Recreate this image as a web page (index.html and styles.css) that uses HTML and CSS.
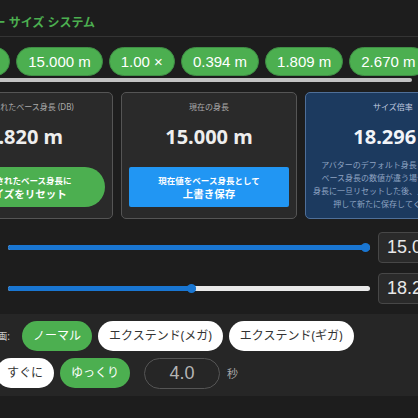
FILE: index.html
```html
<!DOCTYPE html>
<html lang="ja">
<head>
  <meta charset="UTF-8" />
  <title>アバター サイズ システム</title>
  <link rel="stylesheet" href="styles.css">
</head>
<body>
  <div class="app">
    <header class="header">
      <h1 class="title">アバター サイズ システム</h1>
    </header>

    <div class="chips">
      <span class="chip">1.820 m</span>
      <span class="chip">15.000 m</span>
      <span class="chip">1.00 ×</span>
      <span class="chip">0.394 m</span>
      <span class="chip">1.809 m</span>
      <span class="chip">2.670 m</span>
    </div>
    <div class="scrollbar"></div>

    <div class="cards">
      <div class="card">
        <div class="card-label">保存されたベース身長 (DB)</div>
        <div class="card-value">1.820 m</div>
        <button class="btn btn-green">
          <span class="btn-small">保存されたベース身長に</span>
          <span class="btn-big">サイズをリセット</span>
        </button>
      </div>
      <div class="card">
        <div class="card-label">現在の身長</div>
        <div class="card-value">15.000 m</div>
        <button class="btn btn-blue">
          <span class="btn-small">現在値をベース身長として</span>
          <span class="btn-big">上書き保存</span>
        </button>
      </div>
      <div class="card card-info">
        <div class="card-label">サイズ倍率</div>
        <div class="card-value">18.296 ×</div>
        <p class="card-note">
          アバターのデフォルト身長と保存された<br>
          ベース身長の数値が違う場合は、ベース<br>
          身長に一旦リセットした後、上書きボタンを<br>
          押して新たに保存してください。
        </p>
      </div>
    </div>

    <div class="slider-row first">
      <span class="slider-label">身長 (m)</span>
      <div class="slider">
        <div class="slider-fill" style="width: 100%"></div>
        <div class="slider-thumb" style="left: 100%"></div>
      </div>
      <input class="num" type="text" value="15.000">
    </div>
    <div class="slider-row">
      <span class="slider-label">倍率</span>
      <div class="slider">
        <div class="slider-fill" style="width: 52%"></div>
        <div class="slider-thumb" style="left: 52%"></div>
      </div>
      <input class="num" type="text" value="18.296">
    </div>

    <div class="panel">
      <div class="opt-row">
        <span class="opt-label">サイズ変化計画:</span>
        <span class="pill on">ノーマル</span>
        <span class="pill">エクステンド(メガ)</span>
        <span class="pill">エクステンド(ギガ)</span>
      </div>
      <div class="opt-row">
        <span class="opt-label short">切替:</span>
        <span class="pill">すぐに</span>
        <span class="pill on">ゆっくり</span>
        <input class="secs" type="text" value="4.0">
        <span class="unit">秒</span>
      </div>
    </div>
  </div>
</body>
</html>
```

FILE: styles.css
```css
body {
  margin: 0;
  background: #1d1d1d;
  color: #eee;
  font-family: "Noto Sans", "Noto Sans CJK JP", sans-serif;
  overflow: hidden;
}

.app {
  width: 544px;
  margin-left: -80px;
  padding: 0 17px;
}

.header {
  height: 37px;
  box-sizing: border-box;
  margin: 0 -17px;
  padding: 14px 0 0 38px;
  border-bottom: 1px solid #343434;
}

.title {
  margin: 0;
  font-size: 12px;
  line-height: 18px;
  font-weight: bold;
  color: #4caf50;
}

.chips {
  display: flex;
  gap: 6px;
  margin: 10px 0 0 -5px;
  white-space: nowrap;
}

.chip {
  flex: none;
  height: 27px;
  line-height: 27px;
  padding: 0 11px;
  border: 1px solid #3f8f45;
  border-radius: 15px;
  background: #4caf50;
  color: #fff;
  font-family: "Liberation Sans", Arial, sans-serif;
  font-size: 15px;
}

.scrollbar {
  width: 475px;
  height: 4px;
  margin-top: 2px;
  border-radius: 2px;
  background: #c2c2c2;
}

.cards {
  display: flex;
  gap: 8px;
  margin-top: 10px;
}

.card {
  flex: none;
  width: 176px;
  box-sizing: border-box;
  padding: 9px 7px 8px;
  border: 1px solid #555;
  border-radius: 5px;
  background: #2a2a2a;
  text-align: center;
}

.card-label {
  font-size: 8px;
  line-height: 10px;
  color: #aaa;
}

.card-value {
  margin-top: 12px;
  font-size: 20px;
  line-height: 26px;
  font-weight: bold;
  color: #eee;
}

.btn {
  display: flex;
  flex-direction: column;
  align-items: center;
  width: 100%;
  margin-top: 17px;
  padding: 6.5px 0;
  border: none;
  color: #fff;
  font-family: "Noto Sans", "Noto Sans CJK JP", sans-serif;
  font-weight: bold;
}

.btn-small {
  font-size: 8.5px;
  line-height: 13px;
}

.btn-big {
  font-size: 10.5px;
  line-height: 14px;
}

.btn-green {
  background: #4caf50;
  border-radius: 20px;
}

.btn-blue {
  background: #2196f3;
  border-radius: 2px;
}

.card-info {
  background: #1c3a5f;
  border-color: #4f6f98;
}

.card-info .card-label {
  color: #c3cde0;
}

.card-info .card-value {
  color: #f2f4f8;
}

.card-note {
  margin: 7.5px 0 0;
  font-size: 8px;
  line-height: 13px;
  color: #8ea3c2;
  white-space: nowrap;
}

.slider-row {
  display: flex;
  align-items: center;
  gap: 8px;
  margin-top: 10px;
}

.slider-row.first {
  margin-top: 13px;
}

.slider-label {
  flex: none;
  width: 63px;
  font-size: 10px;
  color: #ccc;
}

.slider {
  position: relative;
  flex: 1;
  height: 5px;
  border-radius: 3px;
  background: #e9e9e9;
}

.slider-fill {
  height: 100%;
  border-radius: 3px;
  background: #1976d2;
}

.slider-thumb {
  position: absolute;
  top: -2px;
  width: 9px;
  height: 9px;
  margin-left: -9px;
  border-radius: 50%;
  background: #1976d2;
}

.num {
  flex: none;
  width: 103px;
  height: 31px;
  box-sizing: border-box;
  padding: 0 8px;
  border: 1px solid #474747;
  border-radius: 4px;
  background: #2a2a2a;
  color: #e8e8e8;
  font-family: "Liberation Sans", Arial, sans-serif;
  font-size: 18px;
}

.panel {
  display: flex;
  flex-direction: column;
  gap: 7px;
  margin-top: 10px;
  padding: 7px 0;
  background: #262626;
}

.opt-row {
  display: flex;
  align-items: center;
  gap: 6px;
}

.opt-label {
  flex: none;
  width: 73px;
  margin-right: 6px;
  text-align: right;
  font-size: 10px;
  color: #ccc;
  white-space: nowrap;
  overflow: hidden;
}

.opt-label.short {
  width: 47px;
}

.pill {
  flex: none;
  height: 30px;
  line-height: 30px;
  padding: 0 11px;
  border-radius: 15px;
  background: #fff;
  color: #333;
  font-size: 12px;
}

.pill.on {
  background: #4caf50;
  color: #fff;
}

.secs {
  width: 76px;
  height: 31px;
  box-sizing: border-box;
  margin-left: 8px;
  border: 1px solid #555;
  border-radius: 16px;
  background: transparent;
  color: #b5b5b5;
  text-align: center;
  font-family: "Liberation Sans", Arial, sans-serif;
  font-size: 18px;
}

.unit {
  margin-left: 1px;
  font-size: 11px;
  color: #aaa;
}
```
